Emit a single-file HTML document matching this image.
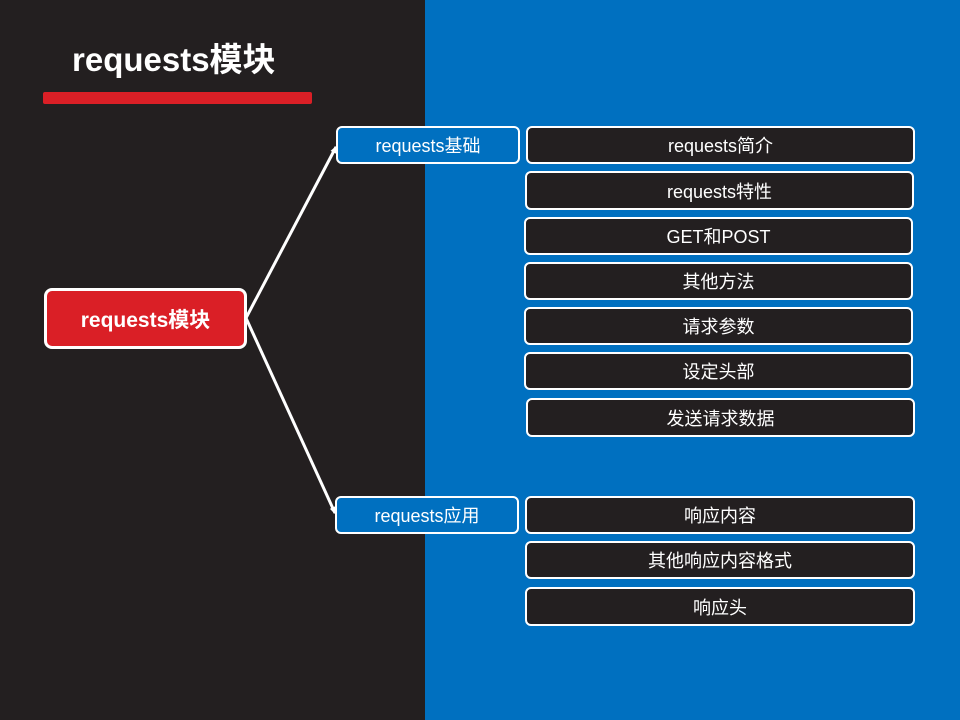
<!DOCTYPE html>
<html><head><meta charset="utf-8"><style>
body{margin:0;width:960px;height:720px;position:relative;overflow:hidden;background:#231f20;font-family:"Liberation Sans","Noto Sans CJK SC",sans-serif;color:#fff}
.blue{position:absolute;left:425px;top:0;width:535px;height:720px;background:#0070c0}
.t{position:absolute;left:72px;top:33px;font-size:33px;font-weight:bold}
.bar{position:absolute;left:43px;top:92px;width:269px;height:12px;background:#da1f26;border-radius:2px}
.b{position:absolute;box-sizing:border-box;border:2.5px solid #fff;border-radius:6px;display:flex;align-items:center;justify-content:center;font-size:18px;background:#231f20}
</style></head><body>
<div class="blue"></div>
<div class="t">requests模块</div>
<div class="bar"></div>
<svg style="position:absolute;left:0;top:0" width="960" height="720">
<defs><marker id="a" markerUnits="userSpaceOnUse" markerWidth="8" markerHeight="8" refX="6" refY="4" orient="auto"><path d="M0,1 L8,4 L0,7 z" fill="#fff"/></marker></defs>
<line x1="246" y1="318" x2="336" y2="147" stroke="#fff" stroke-width="3" marker-end="url(#a)"/>
<line x1="246" y1="318" x2="335" y2="513" stroke="#fff" stroke-width="3" marker-end="url(#a)"/>
</svg>
<div class="b" style="left:44px;top:288px;width:203px;height:61px;background:#da1f26;border-width:3px;border-radius:8px;font-weight:bold;font-size:21px">requests模块</div>
<div class="b" style="left:336px;top:126px;width:184px;height:38px;background:#0070c0">requests基础</div>
<div class="b" style="left:335px;top:496px;width:184px;height:38px;background:#0070c0">requests应用</div>
<div class="b" style="left:526px;top:126px;width:389px;height:38px">requests简介</div>
<div class="b" style="left:525px;top:171px;width:389px;height:39px">requests特性</div>
<div class="b" style="left:524px;top:217px;width:389px;height:38px">GET和POST</div>
<div class="b" style="left:524px;top:262px;width:389px;height:38px">其他方法</div>
<div class="b" style="left:524px;top:307px;width:389px;height:38px">请求参数</div>
<div class="b" style="left:524px;top:352px;width:389px;height:38px">设定头部</div>
<div class="b" style="left:526px;top:398px;width:389px;height:39px">发送请求数据</div>
<div class="b" style="left:525px;top:496px;width:390px;height:38px">响应内容</div>
<div class="b" style="left:525px;top:541px;width:390px;height:38px">其他响应内容格式</div>
<div class="b" style="left:525px;top:587px;width:390px;height:39px">响应头</div>
</body></html>
